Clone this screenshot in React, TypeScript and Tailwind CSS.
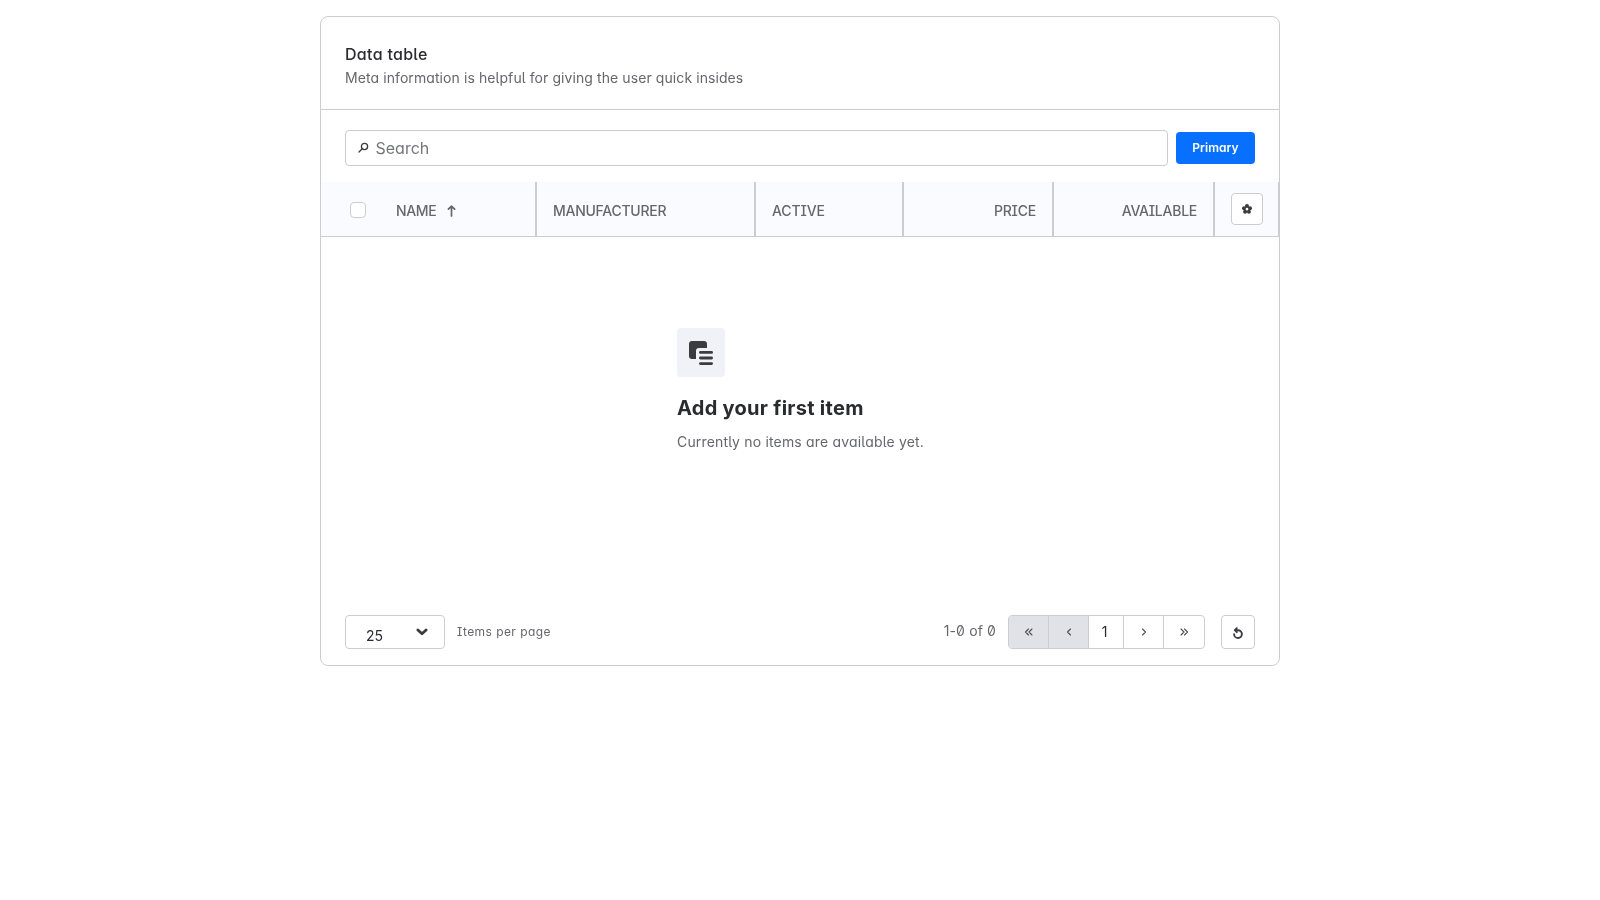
import React from "react";

const columns = [
  { label: "MANUFACTURER", cell: "w-[219px] justify-start tracking-[-0.26px]" },
  { label: "ACTIVE", cell: "w-[148px] justify-start tracking-[-0.1px]" },
  { label: "PRICE", cell: "w-[150px] justify-end tracking-[-0.2px]" },
  { label: "AVAILABLE", cell: "w-[161px] justify-end tracking-[-0.25px]" },
];

function PageArrow({ d, className }: { d: string; className: string }) {
  return (
    <span className={`flex items-center justify-center border-[#cccdd3] ${className}`}>
      <svg width="10" height="10" viewBox="0 0 10 10" fill="none" stroke="#4d4f54" strokeWidth="1.1" strokeLinecap="round" strokeLinejoin="round">
        <path d={d} />
      </svg>
    </span>
  );
}

export default function App() {
  return (
    <main className="h-[900px] pt-4 font-['Inter',sans-serif] text-[#66676b] will-change-transform [font-feature-settings:'ss02','cv11']">
      <section className="mx-auto flex h-[650px] w-[960px] flex-col overflow-hidden rounded-lg border border-[#cccdd3]">
        <header className="h-[93px] shrink-0 border-b border-[#cccdd3] px-6 pt-[25px]">
          <h1 className="text-base leading-6 font-medium tracking-[0.3px] text-[#2a2b2f]">Data table</h1>
          <p className="pt-px text-sm leading-[22px] tracking-[0.085px]">Meta information is helpful for giving the user quick insides</p>
        </header>

        <div className="flex shrink-0 items-center gap-2 px-6 pt-5 pb-4">
          <div className="flex h-9 flex-1 items-center rounded border border-[#cccdd3] pl-3">
            <svg className="mb-0.5" width="11" height="11" viewBox="0 0 11 11" fill="none" stroke="#3b3c40" strokeWidth="1.3" strokeLinecap="round">
              <circle cx="6.500" cy="4.500" r="3.100" />
              <path d="M4.200 6.800 1 10" />
            </svg>
            <span className="ml-[6.5px] text-base leading-6 text-[#75767a]">Search</span>
          </div>
          <button className="h-8 w-[79px] rounded bg-[#0870ff] text-xs font-semibold tracking-[0.05px] text-white">Primary</button>
        </div>

        <div className="flex h-[55px] shrink-0 border-b border-[#cccdd3] bg-[#fafbff] text-sm font-medium">
          <div className="flex w-[216px] items-center border-r-2 border-[#cccdd3] pt-0.5 pl-[29px]">
            <span className="size-4 rounded border border-[#cccdd3] bg-white" />
            <span className="ml-[30px] pt-0.5 tracking-[-0.35px]">NAME</span>
            <svg className="mt-0.5 ml-[11px]" width="9" height="12" viewBox="0 0 9 12" fill="none" stroke="#66676b" strokeWidth="1.700" strokeLinecap="round" strokeLinejoin="round">
              <path d="M4.500 11V1.200M1.400 4.200 4.500 1.100l3.100 3.100" />
            </svg>
          </div>
          {columns.map((c) => (
            <div key={c.label} className={`flex items-center border-r-2 border-[#cccdd3] px-4 pt-1 ${c.cell}`}>
              {c.label}
            </div>
          ))}
          <div className="flex flex-1 items-center border-r border-[#cccdd3] pl-4">
            <button className="flex size-8 items-center justify-center rounded border border-[#cccdd3] bg-white">
              <svg width="10" height="10" viewBox="0 0 10 10" fill="#3b3c40">
                <circle cx="5" cy="2" r="2" />
                <circle cx="8" cy="4.200" r="2" />
                <circle cx="6.900" cy="7.700" r="2" />
                <circle cx="3.100" cy="7.700" r="2" />
                <circle cx="2" cy="4.200" r="2" />
                <circle cx="5" cy="5.100" r="2.200" fill="none" stroke="#3b3c40" strokeWidth="1.500" />
                <circle cx="5" cy="5.100" r="1.300" fill="#fff" />
              </svg>
            </button>
          </div>
        </div>

        <div className="flex flex-1 justify-center pt-[91px]">
          <div className="w-[246px]">
            <div className="flex h-[49px] w-12 items-center justify-center rounded bg-[#f1f2f8]">
              <svg width="24" height="24" viewBox="0 0 24 24" fill="#3b3c40">
                <path d="M3 0h12a3 3 0 0 1 3 3v4h-8a3 3 0 0 0-3 3v8H3a3 3 0 0 1-3-3V3a3 3 0 0 1 3-3Z" />
                <rect x="10" y="10" width="14" height="2.800" rx="1.400" />
                <rect x="10" y="15.600" width="14" height="2.800" rx="1.400" />
                <rect x="10" y="21.200" width="14" height="2.800" rx="1.400" />
              </svg>
            </div>
            <h2 className="mt-4 text-xl leading-[30px] font-bold tracking-[0.28px] whitespace-nowrap text-[#2a2b2f]">Add your first item</h2>
            <p className="mt-2 text-sm leading-[22px] tracking-[0.18px] whitespace-nowrap">Currently no items are available yet.</p>
          </div>
        </div>

        <footer className="flex h-[50px] shrink-0 items-start px-6">
          <div className="flex h-[34px] w-[100px] justify-between rounded border border-[#cccdd3] pr-4 pl-5">
            <span className="pt-[10px] text-sm leading-5 text-[#2a2b2f]">25</span>
            <svg className="mt-3" width="12" height="8" viewBox="0 0 12 8" fill="none" stroke="#3b3c40" strokeWidth="2.800" strokeLinecap="round" strokeLinejoin="round">
              <path d="m1.900 2 4.100 3.800L10.100 2" />
            </svg>
          </div>
          <span className="ml-3 text-xs leading-[34px] tracking-[0.44px]">Items per page</span>
          <span className="ml-auto text-sm leading-8 tracking-[0.13px]">1-0 of 0</span>
          <div className="ml-3 flex h-[34px] w-[197px] overflow-hidden rounded border border-[#cccdd3]">
            <PageArrow className="w-10 border-r bg-[#e1e2e8]" d="M4.500 2 1.500 5l3 3M8 2 5 5l3 3" />
            <PageArrow className="w-10 border-r bg-[#e1e2e8]" d="M6.500 2l-3 3 3 3" />
            <span className="flex w-[35px] items-center justify-center border-r border-[#cccdd3] pr-[3px] text-sm text-[#2a2b2f]">1</span>
            <PageArrow className="w-10 border-r" d="M3.500 2l3 3-3 3" />
            <PageArrow className="w-10" d="M2 2l3 3-3 3M5.500 2l3 3-3 3" />
          </div>
          <button className="ml-4 flex size-[34px] items-center justify-center rounded border border-[#cccdd3]">
            <svg className="mt-px" width="10" height="12" viewBox="0 0 10 12" fill="none" stroke="#3b3c40" strokeWidth="1.900" strokeLinecap="round" strokeLinejoin="round">
              <path d="M1.100 7.200a3.900 3.900 0 1 0 3.900-4H2.500M3.800 1.200 1.800 3.200l2 2" />
            </svg>
          </button>
        </footer>
      </section>
    </main>
  );
}
